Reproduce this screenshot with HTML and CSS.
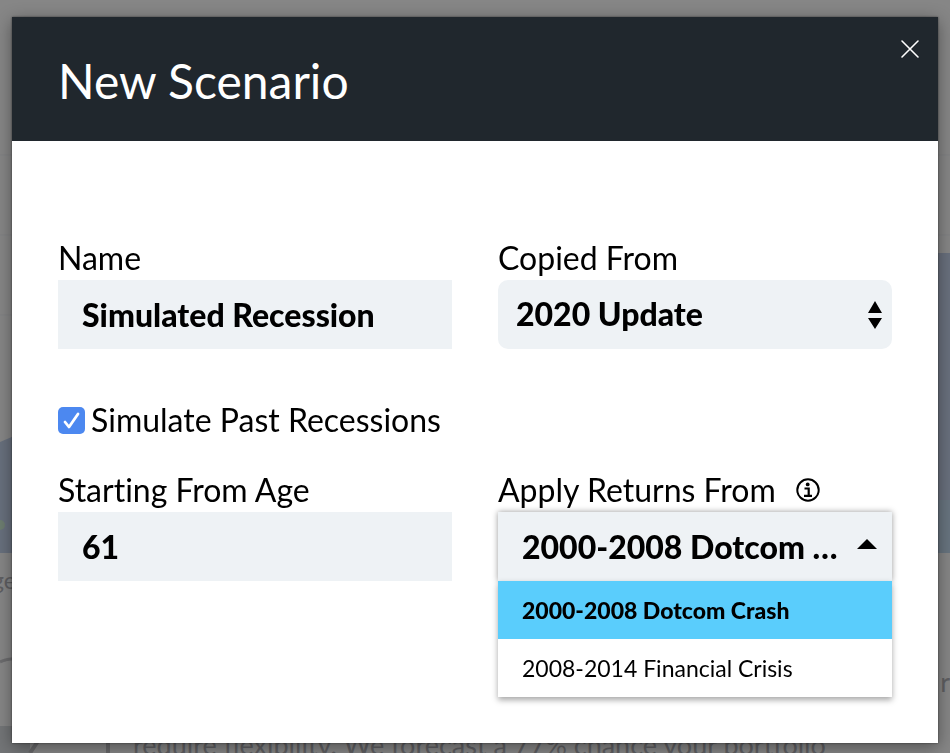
FILE: index.html
```html
<!DOCTYPE html>
<html lang="en">
<head>
    <meta charset="UTF-8">
    <meta name="viewport" content="width=device-width, initial-scale=1.0">
    <title>New Scenario</title>
    <link rel="stylesheet" href="styles.css">
</head>
<body>

    <!-- dimmed page behind the dialog -->
    <div class="backdrop" aria-hidden="true">
        <svg class="backdrop-art" viewBox="0 0 950 753" preserveAspectRatio="none">
            <rect x="0" y="0" width="950" height="753" fill="#868686"/>
            <path d="M0 155H950M0 235H950M0 315H950" stroke="#808183" stroke-width="1"/>
            <path d="M0 442L40 425V553H0Z" fill="#68707d"/>
            <rect x="900" y="253" width="50" height="300" fill="#69707d"/>
            <rect x="900" y="500" width="50" height="53" fill="#68747f"/>
            <circle cx="0" cy="525" r="5" fill="#6d7d70"/>
            <path d="M0 662Q8 658 20 659" stroke="#6c6c6e" stroke-width="3" fill="none"/>
            <rect x="0" y="726" width="30" height="27" fill="#737577"/>
            <path d="M30 753L42 735M108 735V753" stroke="#68686a" stroke-width="4"/>
        </svg>
        <span class="axis-label">ge</span>
        <span class="side-text">r</span>
        <p class="page-text">require flexibility. We forecast a 77% chance your portfolio</p>
    </div>

    <div class="modal" role="dialog" aria-labelledby="modal-title">
        <header class="modal-header">
            <h1 class="modal-title" id="modal-title">New Scenario</h1>
            <button class="close" type="button" aria-label="Close">
                <svg width="20" height="20" viewBox="0 0 20 20">
                    <path d="M2 2L18 18M18 2L2 18" stroke="#fff" stroke-width="1.6" stroke-linecap="round"/>
                </svg>
            </button>
        </header>

        <form class="modal-body">
            <div class="row">
                <div class="field">
                    <label for="name">Name</label>
                    <input class="control" type="text" id="name" value="Simulated Recession">
                </div>
                <div class="field">
                    <label for="copied">Copied From</label>
                    <div class="select-wrap">
                        <select class="control rounded" id="copied">
                            <option>2020 Update</option>
                        </select>
                        <svg class="updown" width="14" height="28" viewBox="0 0 14 28">
                            <path d="M7 0L14 12H0ZM0 17H14L7 28Z"/>
                        </svg>
                    </div>
                </div>
            </div>

            <div class="check">
                <span class="tick-box">
                    <input type="checkbox" id="simulate" checked>
                    <svg class="tick" width="27" height="27" viewBox="0 0 27 27">
                        <path d="M7 15L11 20L20 7" fill="none" stroke="#fff" stroke-width="2.8" stroke-linecap="round" stroke-linejoin="round"/>
                    </svg>
                </span>
                <label for="simulate">Simulate Past Recessions</label>
            </div>

            <div class="row">
                <div class="field">
                    <label for="age">Starting From Age</label>
                    <input class="control" type="text" id="age" value="61">
                </div>
                <div class="field">
                    <div class="label-line">
                        <label for="returns">Apply Returns From</label>
                        <svg width="24" height="24" viewBox="0 0 24 24">
                            <circle cx="12" cy="12" r="10.7" fill="none" stroke="#000" stroke-width="2"/>
                            <circle cx="11.7" cy="6.4" r="1.9"/>
                            <path d="M8.5 10.5H12.7V17.5M8 17.8H16" fill="none" stroke="#000" stroke-width="2.2"/>
                        </svg>
                    </div>
                    <div class="dropdown">
                        <select class="control" id="returns">
                            <option>2000-2008 Dotcom Crash</option>
                            <option>2008-2014 Financial Crisis</option>
                        </select>
                        <svg class="caret" width="20" height="10" viewBox="0 0 20 10">
                            <path d="M10 0L20 10H0Z"/>
                        </svg>
                        <ul class="menu" role="listbox" aria-label="Apply Returns From">
                            <li class="active" role="option" aria-selected="true">2000-2008 Dotcom Crash</li>
                            <li role="option" aria-selected="false">2008-2014 Financial Crisis</li>
                        </ul>
                    </div>
                </div>
            </div>
        </form>
    </div>

</body>
</html>
```
FILE: styles.css
```css
* {
    box-sizing: border-box;
}

body {
    margin: 0;
    padding: 17px 12px 10px;
    font-family: Lato, sans-serif;
    font-size: 32px;
    line-height: 36px;
    font-variant-ligatures: none;
    color: #000;
    background: #868686;
}

.backdrop {
    position: fixed;
    inset: 0;
    overflow: hidden;
    color: #5f5f62;
}

.backdrop-art {
    display: block;
    width: 100%;
    height: 100%;
}

.axis-label,
.side-text,
.page-text {
    position: absolute;
    margin: 0;
    font-size: 27px;
    white-space: nowrap;
}

.axis-label {
    left: -8px;
    top: 562px;
    font-size: 23px;
}

.side-text {
    right: 0;
    top: 664px;
}

.page-text {
    left: 133px;
    bottom: -10px;
}

.modal {
    position: relative;
    background: #fff;
    box-shadow: 0 4px 16px rgba(0, 0, 0, 0.4), 0 0 2px rgba(0, 0, 0, 0.5);
}

.modal-header {
    display: flex;
    justify-content: space-between;
    align-items: flex-start;
    padding: 22px 18px 36px 46px;
    background: #20272d;
    color: #fff;
}

.modal-title {
    margin: 18px 0 0;
    font-size: 48px;
    line-height: 48px;
    font-weight: 400;
}

.close {
    display: flex;
    padding: 0;
    border: none;
    background: none;
    cursor: pointer;
}

.modal-body {
    padding: 99px 46px 162px;
}

.row {
    display: grid;
    grid-template-columns: 1fr 1fr;
    gap: 46px;
}

.field {
    display: flex;
    flex-direction: column;
    gap: 4px;
    min-width: 0;
}

.control {
    display: block;
    width: 100%;
    height: 69px;
    margin: 0;
    padding: 0 24px;
    border: none;
    border-radius: 0;
    outline: none;
    appearance: none;
    background: #eef2f5;
    color: #000;
    font-family: inherit;
    font-size: 32px;
    font-weight: 900;
}

.rounded {
    padding: 0 40px 2px 18px;
    border-radius: 10px;
}

.select-wrap,
.dropdown,
.tick-box {
    position: relative;
}

.updown {
    position: absolute;
    right: 10px;
    top: 21px;
    pointer-events: none;
}

.check {
    display: flex;
    align-items: center;
    gap: 6px;
    margin: 53px 0 34px;
}

.tick-box {
    display: flex;
}

.check input {
    width: 27px;
    height: 27px;
    margin: 0;
    border-radius: 5px;
    appearance: none;
    background: #dfe4e8;
}

.check input:checked {
    background: #4c88f0;
}

.tick {
    display: none;
    position: absolute;
    inset: 0;
    pointer-events: none;
}

.check input:checked + .tick {
    display: block;
}

.label-line {
    display: flex;
    align-items: center;
    gap: 20px;
}

.dropdown {
    box-shadow: 0 0 6px rgba(0, 0, 0, 0.4);
}

.dropdown .control {
    padding-right: 48px;
    text-overflow: ellipsis;
}

.caret {
    position: absolute;
    right: 15px;
    top: 27px;
    pointer-events: none;
}

.menu {
    position: absolute;
    top: 100%;
    left: 0;
    right: 0;
    margin: 0;
    padding: 0;
    list-style: none;
    background: #fff;
    font-size: 23px;
    box-shadow: 0 3px 6px rgba(0, 0, 0, 0.35);
}

.menu li {
    padding: 11px 24px;
}

.menu .active {
    background: #5acdfc;
    font-weight: 900;
}
```
